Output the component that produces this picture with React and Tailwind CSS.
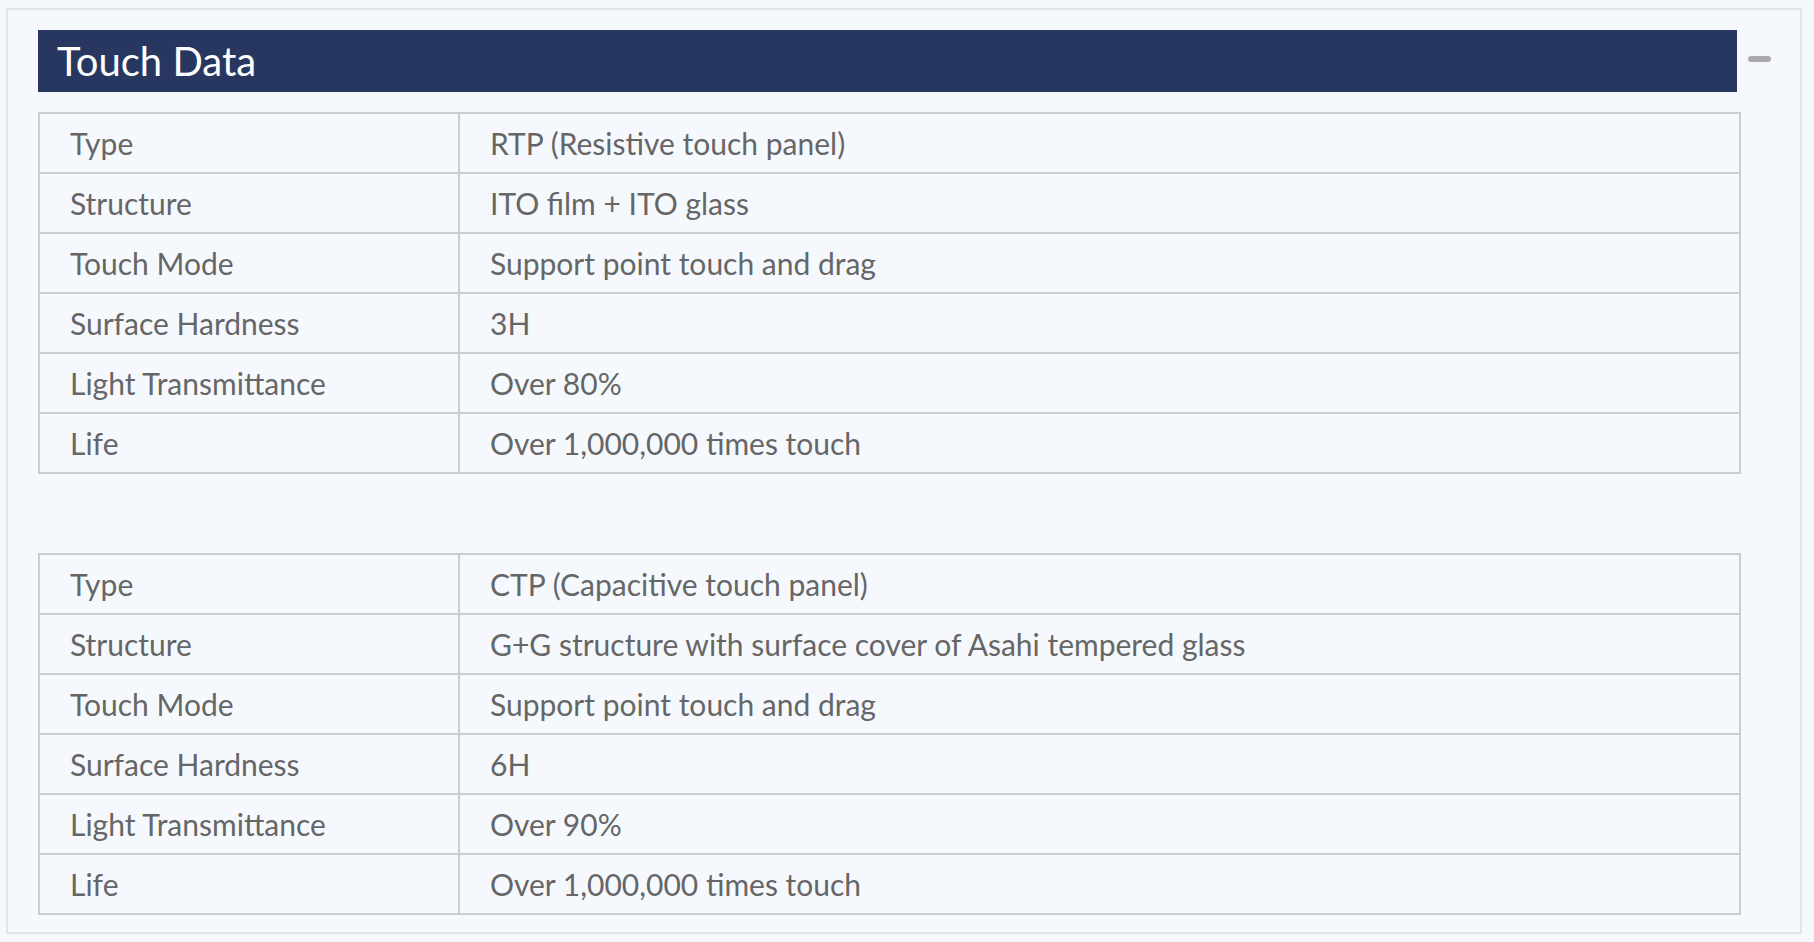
const tables = [
  [
    ["Type", "RTP (Resistive touch panel)"],
    ["Structure", "ITO film + ITO glass"],
    ["Touch Mode", "Support point touch and drag"],
    ["Surface Hardness", "3H"],
    ["Light Transmittance", "Over 80%"],
    ["Life", "Over 1,000,000 times touch"],
  ],
  [
    ["Type", "CTP (Capacitive touch panel)"],
    ["Structure", "G+G structure with surface cover of Asahi tempered glass"],
    ["Touch Mode", "Support point touch and drag"],
    ["Surface Hardness", "6H"],
    ["Light Transmittance", "Over 90%"],
    ["Life", "Over 1,000,000 times touch"],
  ],
];

const SpecTable = ({ rows, className }) => {
  return (
    <div className={"w-[1703px] border-2 border-[#cccccc] " + className}>
      {rows.map(([label, value], i) => (
        <div
          key={label}
          className={
            i === 0
              ? "flex h-[58px]"
              : "flex h-[60px] border-t-2 border-[#cccccc]"
          }
        >
          <div className="w-[420px] shrink-0 border-r-2 border-[#cccccc] pl-[30px] flex items-center">
            {label}
          </div>
          <div className="flex-1 pl-[30px] flex items-center">{value}</div>
        </div>
      ))}
    </div>
  );
};

const App = () => {
  return (
    <div
      className="min-h-screen bg-[#f5f9fe] pt-[8px] pl-[6px]"
      style={{ fontFamily: "Lato, 'Open Sans', sans-serif" }}
    >
      <div className="w-[1796px] h-[926px] border-2 border-[#e4e4e4] pl-[30px] pt-[20px]">
        <div className="flex">
          <div className="w-[1699px] h-[62px] bg-[#283760] flex items-center pl-[19px]">
            <h2 className="text-white text-[40px] leading-none">Touch Data</h2>
          </div>
          <div className="ml-[11px] mt-[26px] w-[23px] h-[6px] rounded-full bg-[#aaaaaa]"></div>
        </div>

        <div className="text-[#666666] text-[30px] leading-none">
          <SpecTable rows={tables[0]} className="mt-[20px]" />
          <SpecTable rows={tables[1]} className="mt-[79px]" />
        </div>
      </div>
    </div>
  );
};

export default App;
